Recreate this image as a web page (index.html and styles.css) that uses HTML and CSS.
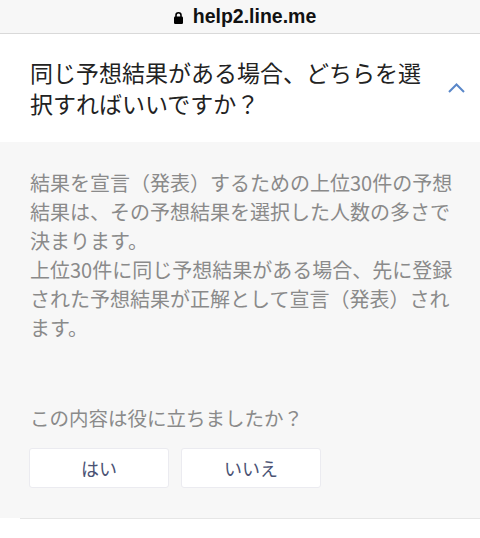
FILE: index.html
```html
<!DOCTYPE html>
<html lang="ja">
<head>
    <meta charset="UTF-8">
    <title>help2.line.me</title>
    <link rel="stylesheet" href="styles.css">
</head>
<body>
<div class="url-bar">
    <svg class="lock" width="9" height="13" viewBox="0 0 9 13">
        <path d="M2 6V4.2a2.5 2.5 0 0 1 5 0V6" fill="none" stroke="#000" stroke-width="1.6"/>
        <rect x="0" y="5.5" width="9" height="7.5" rx="1.2" fill="#000"/>
    </svg>
    <span class="url">help2.line.me</span>
</div>
<div class="faq">
    <div class="faq-head">
        <h1 class="faq-title">同じ予想結果がある場合、どちらを選択すればいいですか？</h1>
        <svg class="chevron" width="17" height="10" viewBox="0 0 17 10">
            <polyline points="1,9 8.5,1.5 16,9" fill="none" stroke="#5a87c9" stroke-width="2"/>
        </svg>
    </div>
    <div class="faq-body">
        <p class="answer">結果を宣言（発表）するための上位30件の予想結果は、その予想結果を選択した人数の多さで決まります。<br>上位30件に同じ予想結果がある場合、先に登録された予想結果が正解として宣言（発表）されます。</p>
        <p class="question">この内容は役に立ちましたか？</p>
        <div class="buttons">
            <button class="btn">はい</button>
            <button class="btn">いいえ</button>
        </div>
    </div>
    <div class="divider"></div>
</div>
</body>
</html>
```
FILE: styles.css
```css
body, div, p, h1 {
    margin: 0;
    padding: 0;
}

body {
    background: #fff;
    font-family: "Noto Sans CJK JP", "Noto Sans", sans-serif;
}

.url-bar {
    height: 33px;
    display: flex;
    align-items: center;
    justify-content: center;
    gap: 10px;
    background: #f7f7f7;
    border-bottom: 1px solid #d9d9d9;
    padding-left: 10px;
}

.lock {
    margin-top: 1px;
}

.url {
    font-family: "Liberation Sans", Arial, sans-serif;
    font-weight: bold;
    font-size: 19.5px;
    color: #111;
    line-height: 33px;
}

.faq-head {
    display: flex;
    align-items: center;
    gap: 18px;
    padding: 23px 15px 23px 30px;
    background: #fff;
}

.faq-title {
    flex: 1;
    font-size: 23px;
    font-weight: normal;
    line-height: 31px;
    color: #222;
}

.faq-body {
    background: #f7f7f7;
    padding: 26px 20px 30px 30px;
}

.answer {
    font-size: 20px;
    line-height: 29px;
    color: #8a8a8a;
}

.question {
    margin-top: 61px;
    font-size: 19.5px;
    line-height: 29px;
    color: #8a8a8a;
}

.buttons {
    display: flex;
    gap: 12px;
    margin-top: 16px;
    margin-left: -1px;
}

.btn {
    width: 140px;
    height: 40px;
    background: #fff;
    border: 1px solid #ebebf0;
    border-radius: 3px;
    font-family: "Noto Sans CJK JP", sans-serif;
    font-size: 18px;
    color: #4a5274;
    padding: 0;
}

.divider {
    margin-left: 20px;
    height: 1px;
    background: #e6e6e6;
}
```
